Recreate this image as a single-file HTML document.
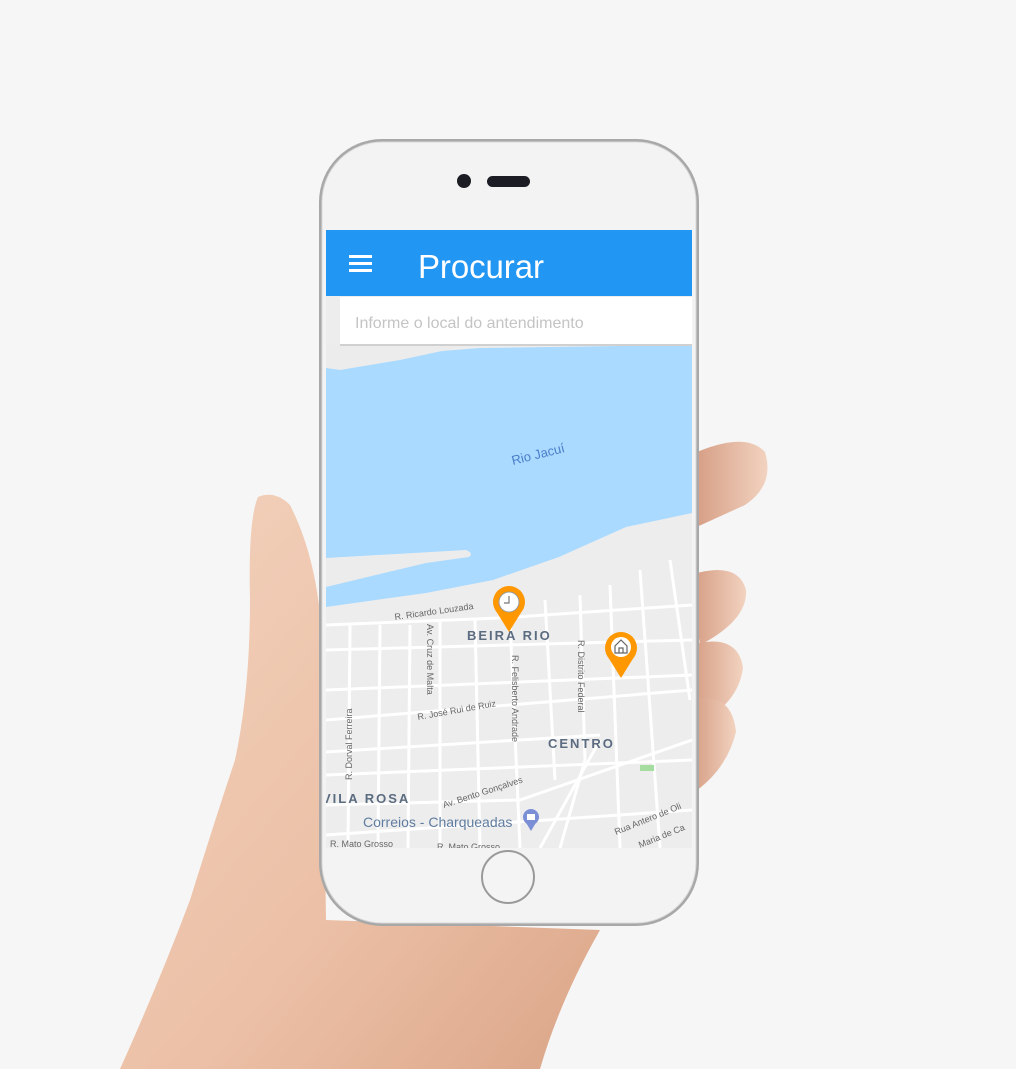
<!DOCTYPE html>
<html><head><meta charset="utf-8"><style>
html,body{margin:0;padding:0;background:#f6f6f6;}
svg{display:block}
</style></head><body>
<svg width="1016" height="1069" viewBox="0 0 1016 1069" xmlns="http://www.w3.org/2000/svg" font-family="Liberation Sans, sans-serif">
<defs>
<linearGradient id="skin" x1="0" y1="0" x2="1" y2="1">
<stop offset="0" stop-color="#f3d2bd"/><stop offset="0.6" stop-color="#ebbfa5"/><stop offset="1" stop-color="#dba588"/>
</linearGradient>
<linearGradient id="fing" x1="0" y1="0" x2="1" y2="0">
<stop offset="0" stop-color="#d49a80"/><stop offset="1" stop-color="#f2d3c0"/>
</linearGradient>
<clipPath id="scr"><rect x="326" y="230" width="366" height="618"/></clipPath>
</defs>
<rect width="1016" height="1069" fill="#f6f6f6"/>
<!-- fingers on right -->
<path d="M690 455 Q745 430 765 452 Q775 485 745 505 L690 530 Z" fill="url(#fing)"/>
<path d="M690 575 Q738 560 746 590 Q748 620 700 645 Z" fill="url(#fing)"/>
<path d="M690 645 Q738 632 743 668 Q738 705 695 725 Z" fill="url(#fing)"/>
<path d="M690 700 Q732 690 736 732 Q726 772 690 795 Z" fill="url(#fing)"/>
<!-- hand -->
<path d="M258 497 Q275 490 290 505 Q318 560 322 640 L326 920 L600 930 Q560 1000 540 1069 L120 1069 Q160 980 190 900 Q215 820 235 760 Q250 690 250 600 Q248 520 258 497 Z" fill="url(#skin)"/>
<!-- phone body -->
<rect x="319" y="139" width="380" height="787" rx="63" fill="#a8a8a8"/>
<rect x="322" y="142" width="374" height="781" rx="60" fill="#f3f3f3" stroke="#d8d8d8" stroke-width="1"/>
<circle cx="464" cy="181" r="7" fill="#1c1c24"/>
<rect x="487" y="176" width="43" height="11" rx="5.5" fill="#1c1c24"/>
<circle cx="508" cy="877" r="26" fill="#f4f4f4" stroke="#9a9a9a" stroke-width="2"/>
<!-- screen -->
<g clip-path="url(#scr)">
<rect x="326" y="230" width="366" height="618" fill="#ededed"/>
<path d="M326 360 L480 348 L692 345 L692 513 L626 527 L559 557 L493 580 L426 593 L326 607 Z" fill="#aadaff"/>
<path d="M326 558 L466 550 Q474 553 469 557 L426 563 L326 587 Z" fill="#ececec"/>
<path d="M326 345 L470 345 L400 360 L340 370 L326 368 Z" fill="#ececec"/>
<text x="510" y="458" font-size="13" fill="#4a7ec9" transform="rotate(-14 540 450)">Rio Jacuí</text>
<g stroke="#ffffff" stroke-width="3" fill="none">
<path d="M326 625 L500 618 L692 605"/>
<path d="M326 650 L692 640"/>
<path d="M326 690 L692 675"/>
<path d="M326 720 L692 690"/>
<path d="M326 752 L600 735"/>
<path d="M326 775 L692 760"/>
<path d="M326 805 L520 800 L692 740"/>
<path d="M326 835 L692 810"/>
<path d="M350 625 L348 848"/>
<path d="M380 625 L378 848"/>
<path d="M410 625 L408 848"/>
<path d="M440 620 L440 848"/>
<path d="M475 620 L480 848"/>
<path d="M510 620 L520 848"/>
<path d="M545 600 L555 780"/>
<path d="M580 595 L585 760"/>
<path d="M610 585 L620 848"/>
<path d="M640 570 L660 848"/>
<path d="M670 560 L690 700"/>
<path d="M600 740 L540 848"/>
<path d="M585 760 L560 848"/>
</g>
<rect x="640" y="765" width="14" height="6" fill="#a5dca0"/>
<g fill="#666" font-size="9">
<text x="395" y="620" transform="rotate(-8 395 620)">R. Ricardo Louzada</text>
<text x="427" y="624" transform="rotate(90 427 624)">Av. Cruz de Malta</text>
<text x="512" y="655" transform="rotate(90 512 655)">R. Felisberto Andrade</text>
<text x="578" y="640" transform="rotate(90 578 640)">R. Distrito Federal</text>
<text x="418" y="720" transform="rotate(-10 418 720)">R. José Rui de Ruiz</text>
<text x="352" y="780" transform="rotate(-90 352 780)">R. Dorval Ferreira</text>
<text x="444" y="808" transform="rotate(-18 444 808)">Av. Bento Gonçalves</text>
<text x="616" y="835" transform="rotate(-22 616 835)">Rua Antero de Oli</text>
<text x="640" y="848" transform="rotate(-22 640 848)">Maria de Ca</text>
<text x="330" y="847">R. Mato Grosso</text>
<text x="437" y="850">R. Mato Grosso</text>
</g>
<g fill="#5b6b80" font-size="13" font-weight="bold" letter-spacing="2">
<text x="467" y="640">BEIRA RIO</text>
<text x="548" y="748">CENTRO</text>
<text x="322" y="803">VILA ROSA</text>
</g>
<text x="363" y="827" font-size="14" fill="#5f7da0">Correios - Charqueadas</text>
<circle cx="531" cy="817" r="8" fill="#7b8fd6"/><path d="M525 821 L531 831 L537 821Z" fill="#7b8fd6"/>
<rect x="527" y="814" width="8" height="6" fill="#fff"/>
<g>
<circle cx="509" cy="602" r="16" fill="#ff9800"/><path d="M496 611 L509 632 L522 611Z" fill="#ff9800"/>
<circle cx="509" cy="602" r="10" fill="#fff" stroke="#999" stroke-width="1"/>
<path d="M509 596 L509 603 L504 603" stroke="#777" stroke-width="1.2" fill="none"/>
<circle cx="621" cy="648" r="16" fill="#ff9800"/><path d="M608 657 L621 678 L634 657Z" fill="#ff9800"/>
<circle cx="621" cy="647" r="10" fill="#fff"/>
<path d="M615 653 L615 646 L621 640 L627 646 L627 653 Z M619 653 L619 648 L623 648 L623 653" stroke="#666" stroke-width="1.2" fill="none"/>
</g>
<rect x="326" y="230" width="366" height="66" fill="#2196f3"/>
<g fill="#fff"><rect x="349" y="255" width="23" height="3"/><rect x="349" y="262" width="23" height="3"/><rect x="349" y="269" width="23" height="3"/></g>
<text x="418" y="278" font-size="33" fill="#fff" textLength="126">Procurar</text>
<rect x="340" y="297" width="352" height="48" fill="#fff"/>
<rect x="340" y="344" width="352" height="2" fill="#d0d0d0"/>
<text x="355" y="328" font-size="16" fill="#c4c4c4">Informe o local do antendimento</text>
</g>
</svg>
</body></html>
